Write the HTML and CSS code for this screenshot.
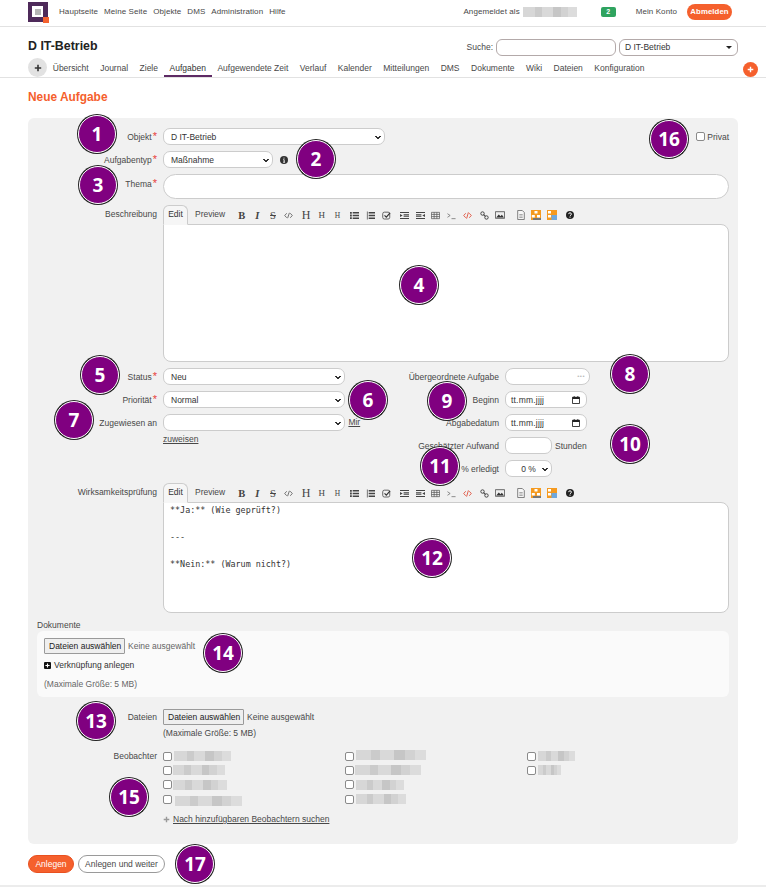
FILE: index.html
```html
<!DOCTYPE html>
<html lang="de">
<head>
<meta charset="utf-8">
<title>Neue Aufgabe</title>
<link rel="stylesheet" href="styles.css">
</head>
<body>
<div class="page">
  <header class="top">
    <svg class="logo" viewBox="0 0 21 21" width="21" height="21"><path fill="#4e2a5a" d="M0 0h20v20H0z"/><path fill="#fff" d="M4 4h11v11H4z"/><path fill="#b5b5b5" d="M7 7h6v6H7z"/><path fill="#f4622f" d="M15 15h6v6h-6z"/></svg>
    <nav class="topnav"><a>Hauptseite</a><a>Meine Seite</a><a>Objekte</a><a>DMS</a><a>Administration</a><a>Hilfe</a></nav>
    <div class="account">
      <span>Angemeldet als</span>
      <span class="blur blur-user"></span>
      <span class="count">2</span>
      <a class="konto">Mein Konto</a>
      <a class="logout">Abmelden</a>
    </div>
  </header>

  <div class="project">
    <h1>D IT-Betrieb</h1>
    <div class="search">
      <span>Suche:</span>
      <input class="search-input" type="text">
      <div class="jump">D IT-Betrieb<i class="caret"></i></div>
    </div>
  </div>

  <div class="tabs">
    <span class="tab-add"><svg viewBox="0 0 10 10" width="8" height="8"><path d="M5 1v8M1 5h8" stroke="#333" stroke-width="2"/></svg></span>
    <a>Übersicht</a><a>Journal</a><a>Ziele</a><a class="on">Aufgaben</a><a>Aufgewendete Zeit</a><a>Verlauf</a><a>Kalender</a><a>Mitteilungen</a><a>DMS</a><a>Dokumente</a><a>Wiki</a><a>Dateien</a><a>Konfiguration</a>
    <span class="tab-plus"><svg viewBox="0 0 10 10" width="7" height="7"><path d="M5 1v8M1 5h8" stroke="#fff" stroke-width="2"/></svg></span>
  </div>

  <h2>Neue Aufgabe</h2>

  <form class="box">
    <div class="row privat-row">
      <label class="lbl">Objekt<em>*</em></label>
      <select class="sel sel-obj"><option>D IT-Betrieb</option></select>
      <label class="privat"><input class="chk" type="checkbox">Privat</label>
    </div>
    <div class="row">
      <label class="lbl">Aufgabentyp<em>*</em></label>
      <select class="sel sel-typ"><option>Maßnahme</option></select>
      <svg class="info" viewBox="0 0 10 10" width="8" height="8"><circle cx="5" cy="5" r="5" fill="#333"/><path d="M5 2v1.3M4 4.6h1.2v3M3.9 7.8h2.4" stroke="#fff" stroke-width="1.1" fill="none"/></svg>
    </div>
    <div class="row">
      <label class="lbl lbl-thema">Thema<em>*</em></label>
      <input class="thema" type="text">
    </div>

    <div class="row row-editor">
      <label class="lbl lbl-ed">Beschreibung</label>
      <div class="editor">
        <div class="edbar">
          <span class="edtab">Edit</span><span class="edprev">Preview</span>
          <div class="tools">
            <b class="t serif">B</b><i class="t serif ital">I</i><s class="t serif">S</s>
            <span class="t"><svg viewBox="0 0 10 10" width="9" height="9"><path d="M3 2.5L.8 5 3 7.5M7 2.5L9.2 5 7 7.5M6 2L4 8" stroke="#555" fill="none" stroke-width=".9"/></svg></span>
            <b class="t serif h1 sp">H</b><span class="t serif h2x">H</span><span class="t serif h3x">H</span>
            <span class="t sp"><svg viewBox="0 0 10 10" width="9" height="9"><path d="M0 1h2v2H0zM0 4h2v2H0zM0 7h2v2H0zM3 1.2h7v1.6H3zM3 4.2h7v1.6H3zM3 7.2h7v1.6H3z" fill="#444"/></svg></span>
            <span class="t"><svg viewBox="0 0 10 10" width="9" height="9"><path d="M1 .5v9h.8v-9zM3 1.2h7v1.6H3zM3 4.2h7v1.6H3zM3 7.2h7v1.6H3z" fill="#444"/></svg></span>
            <span class="t"><svg viewBox="0 0 10 10" width="9" height="9"><rect x=".8" y="1.3" width="7.8" height="7.6" rx="1.8" fill="none" stroke="#555"/><path d="M2.8 4.8l2 2L9 2" stroke="#333" stroke-width="1.3" fill="none"/></svg></span>
            <span class="t sp2"><svg viewBox="0 0 10 10" width="9" height="9"><path d="M0 1h10v1.2H0zM0 7.8h10V9H0zM4 3.7h6v1H4zM4 5.3h6v1H4zM0 3.2L3 5 0 6.8z" fill="#444"/></svg></span>
            <span class="t"><svg viewBox="0 0 10 10" width="9" height="9"><path d="M0 1h10v1.2H0zM0 7.8h10V9H0zM0 3.7h6v1H0zM0 5.3h6v1H0zM10 3.2L7 5l3 1.8z" fill="#444"/></svg></span>
            <span class="t"><svg viewBox="0 0 10 10" width="9" height="9"><path d="M.5 1.5h9v7h-9zM.5 3.8h9M.5 6.2h9M3.5 1.5v7M6.5 1.5v7" stroke="#555" stroke-width=".8" fill="none"/></svg></span>
            <span class="t"><svg viewBox="0 0 10 10" width="9" height="9"><path d="M.5 3l3 2-3 2M5 8.5h4.5" stroke="#666" stroke-width=".8" fill="none"/></svg></span>
            <span class="t"><svg viewBox="0 0 10 10" width="9" height="9"><path d="M3 2.5L.8 5 3 7.5M7 2.5L9.2 5 7 7.5M6 1.5L4 8.5" stroke="#e0503c" fill="none" stroke-width="1"/></svg></span>
            <span class="t sp"><svg viewBox="0 0 10 10" width="9" height="9"><circle cx="2.8" cy="2.8" r="1.9" fill="none" stroke="#444" stroke-width="1.1"/><circle cx="7.2" cy="7.2" r="1.9" fill="none" stroke="#444" stroke-width="1.1"/><path d="M4 4l2 2" stroke="#444" stroke-width="1.2"/></svg></span>
            <span class="t"><svg viewBox="0 0 10 10" width="10" height="10"><path d="M.4 1.7h9.2v6.6H.4z" fill="#eee" stroke="#444" stroke-width=".8"/><path d="M1.2 7.6l2.6-3 1.6 1.6 1.5-1.4 2 2.8z" fill="#333"/></svg></span>
            <span class="t sp3"><svg viewBox="0 0 10 10" width="10" height="10"><path d="M1.7.5h4.6l2 2v7H1.7z" fill="#f6f6f6" stroke="#666" stroke-width=".8"/><path d="M3.3 4.5h3.4M3.3 6h3.4M3.3 7.5h3.4" stroke="#777" stroke-width=".6"/></svg></span>
            <span class="t"><svg viewBox="0 0 10 10" width="10" height="10"><path d="M0 0h10v10H0z" fill="#f59a1f"/><path d="M3.5 1h3v2.5h-3zM.8 5h3v2.5h-3zM6 5h3v2.5H6z" fill="#fff"/><path d="M2 8h8v2H2z" fill="#777"/></svg></span>
            <span class="t"><svg viewBox="0 0 10 10" width="10" height="10"><path d="M0 0h10v10H0z" fill="#f59a1f"/><path d="M1 1h3v2.5H1zM1 5h3v2.5H1z" fill="#fff"/><path d="M4.5 5H10v5H4.5z" fill="#6fa8dc"/></svg></span>
            <span class="t sp"><svg viewBox="0 0 10 10" width="8" height="8"><circle cx="5" cy="5" r="5" fill="#222"/><path d="M3.2 3.9c0-2.2 3.6-2.2 3.6 0 0 1.4-1.8 1.2-1.8 2.6M5 7.2v1.2" stroke="#fff" stroke-width="1.2" fill="none"/></svg></span>
          </div>
        </div>
        <textarea class="ta ta-desc"></textarea>
      </div>
    </div>

    <div class="cols">
      <div class="col col-l">
        <div class="row">
          <label class="lbl">Status<em>*</em></label>
          <select class="sel sel-mid"><option>Neu</option></select>
        </div>
        <div class="row">
          <label class="lbl">Priorität<em>*</em></label>
          <select class="sel sel-mid"><option>Normal</option></select>
        </div>
        <div class="row row-assign">
          <label class="lbl">Zugewiesen an</label>
          <div class="assign"><select class="sel sel-mid"><option></option></select> <a class="ul">Mir zuweisen</a></div>
        </div>
      </div>
      <div class="col col-r">
        <div class="row">
          <label class="lbl lbl-r">Übergeordnete Aufgabe</label>
          <div class="parent">•••</div>
        </div>
        <div class="row">
          <label class="lbl lbl-r">Beginn</label>
          <div class="date">tt.mm.jjjj<svg viewBox="0 0 10 10" width="8" height="8"><path d="M.6 1.6h8.8v7.8H.6z" fill="none" stroke="#222" stroke-width="1.1"/><path d="M.6 1.2h8.8v2.4H.6zM2.2 0h1v2h-1zM6.8 0h1v2h-1z" fill="#222"/></svg></div>
        </div>
        <div class="row">
          <label class="lbl lbl-r">Abgabedatum</label>
          <div class="date">tt.mm.jjjj<svg viewBox="0 0 10 10" width="8" height="8"><path d="M.6 1.6h8.8v7.8H.6z" fill="none" stroke="#222" stroke-width="1.1"/><path d="M.6 1.2h8.8v2.4H.6zM2.2 0h1v2h-1zM6.8 0h1v2h-1z" fill="#222"/></svg></div>
        </div>
        <div class="row">
          <label class="lbl lbl-r">Geschätzter Aufwand</label>
          <input class="hours" type="text"><span class="unit">Stunden</span>
        </div>
        <div class="row">
          <label class="lbl lbl-r">% erledigt</label>
          <select class="sel sel-pct"><option>0 %</option></select>
        </div>
      </div>
    </div>

    <div class="row row-editor">
      <label class="lbl lbl-ed">Wirksamkeitsprüfung</label>
      <div class="editor">
        <div class="edbar">
          <span class="edtab">Edit</span><span class="edprev">Preview</span>
          <div class="tools">
            <b class="t serif">B</b><i class="t serif ital">I</i><s class="t serif">S</s>
            <span class="t"><svg viewBox="0 0 10 10" width="9" height="9"><path d="M3 2.5L.8 5 3 7.5M7 2.5L9.2 5 7 7.5M6 2L4 8" stroke="#555" fill="none" stroke-width=".9"/></svg></span>
            <b class="t serif h1 sp">H</b><span class="t serif h2x">H</span><span class="t serif h3x">H</span>
            <span class="t sp"><svg viewBox="0 0 10 10" width="9" height="9"><path d="M0 1h2v2H0zM0 4h2v2H0zM0 7h2v2H0zM3 1.2h7v1.6H3zM3 4.2h7v1.6H3zM3 7.2h7v1.6H3z" fill="#444"/></svg></span>
            <span class="t"><svg viewBox="0 0 10 10" width="9" height="9"><path d="M1 .5v9h.8v-9zM3 1.2h7v1.6H3zM3 4.2h7v1.6H3zM3 7.2h7v1.6H3z" fill="#444"/></svg></span>
            <span class="t"><svg viewBox="0 0 10 10" width="9" height="9"><rect x=".8" y="1.3" width="7.8" height="7.6" rx="1.8" fill="none" stroke="#555"/><path d="M2.8 4.8l2 2L9 2" stroke="#333" stroke-width="1.3" fill="none"/></svg></span>
            <span class="t sp2"><svg viewBox="0 0 10 10" width="9" height="9"><path d="M0 1h10v1.2H0zM0 7.8h10V9H0zM4 3.7h6v1H4zM4 5.3h6v1H4zM0 3.2L3 5 0 6.8z" fill="#444"/></svg></span>
            <span class="t"><svg viewBox="0 0 10 10" width="9" height="9"><path d="M0 1h10v1.2H0zM0 7.8h10V9H0zM0 3.7h6v1H0zM0 5.3h6v1H0zM10 3.2L7 5l3 1.8z" fill="#444"/></svg></span>
            <span class="t"><svg viewBox="0 0 10 10" width="9" height="9"><path d="M.5 1.5h9v7h-9zM.5 3.8h9M.5 6.2h9M3.5 1.5v7M6.5 1.5v7" stroke="#555" stroke-width=".8" fill="none"/></svg></span>
            <span class="t"><svg viewBox="0 0 10 10" width="9" height="9"><path d="M.5 3l3 2-3 2M5 8.5h4.5" stroke="#666" stroke-width=".8" fill="none"/></svg></span>
            <span class="t"><svg viewBox="0 0 10 10" width="9" height="9"><path d="M3 2.5L.8 5 3 7.5M7 2.5L9.2 5 7 7.5M6 1.5L4 8.5" stroke="#e0503c" fill="none" stroke-width="1"/></svg></span>
            <span class="t sp"><svg viewBox="0 0 10 10" width="9" height="9"><circle cx="2.8" cy="2.8" r="1.9" fill="none" stroke="#444" stroke-width="1.1"/><circle cx="7.2" cy="7.2" r="1.9" fill="none" stroke="#444" stroke-width="1.1"/><path d="M4 4l2 2" stroke="#444" stroke-width="1.2"/></svg></span>
            <span class="t"><svg viewBox="0 0 10 10" width="10" height="10"><path d="M.4 1.7h9.2v6.6H.4z" fill="#eee" stroke="#444" stroke-width=".8"/><path d="M1.2 7.6l2.6-3 1.6 1.6 1.5-1.4 2 2.8z" fill="#333"/></svg></span>
            <span class="t sp3"><svg viewBox="0 0 10 10" width="10" height="10"><path d="M1.7.5h4.6l2 2v7H1.7z" fill="#f6f6f6" stroke="#666" stroke-width=".8"/><path d="M3.3 4.5h3.4M3.3 6h3.4M3.3 7.5h3.4" stroke="#777" stroke-width=".6"/></svg></span>
            <span class="t"><svg viewBox="0 0 10 10" width="10" height="10"><path d="M0 0h10v10H0z" fill="#f59a1f"/><path d="M3.5 1h3v2.5h-3zM.8 5h3v2.5h-3zM6 5h3v2.5H6z" fill="#fff"/><path d="M2 8h8v2H2z" fill="#777"/></svg></span>
            <span class="t"><svg viewBox="0 0 10 10" width="10" height="10"><path d="M0 0h10v10H0z" fill="#f59a1f"/><path d="M1 1h3v2.5H1zM1 5h3v2.5H1z" fill="#fff"/><path d="M4.5 5H10v5H4.5z" fill="#6fa8dc"/></svg></span>
            <span class="t sp"><svg viewBox="0 0 10 10" width="8" height="8"><circle cx="5" cy="5" r="5" fill="#222"/><path d="M3.2 3.9c0-2.2 3.6-2.2 3.6 0 0 1.4-1.8 1.2-1.8 2.6M5 7.2v1.2" stroke="#fff" stroke-width="1.2" fill="none"/></svg></span>
          </div>
        </div>
        <textarea class="ta ta-check">**Ja:** (Wie geprüft?)

---

**Nein:** (Warum nicht?)</textarea>
      </div>
    </div>

    <div class="doc-label">Dokumente</div>
    <div class="docs">
      <div class="file"><span class="filebtn">Dateien auswählen</span><span class="nofile">Keine ausgewählt</span></div>
      <div class="addlink"><svg viewBox="0 0 10 10" width="7" height="7"><rect width="10" height="10" rx="1.5" fill="#111"/><path d="M5 2v6M2 5h6" stroke="#fff" stroke-width="1.6"/></svg>Verknüpfung anlegen</div>
      <div class="hint">(Maximale Größe: 5 MB)</div>
    </div>

    <div class="row row-files">
      <label class="lbl lbl-plain">Dateien</label>
      <div>
        <div class="file"><span class="filebtn">Dateien auswählen</span><span class="nofile dark">Keine ausgewählt</span></div>
        <div class="hint hint-files">(Maximale Größe: 5 MB)</div>
      </div>
    </div>

    <div class="row row-watch">
      <label class="lbl lbl-plain">Beobachter</label>
      <div class="watch-area">
        <div class="watchers">
          <div class="w"><input class="chk" type="checkbox"><span class="blur w57"></span></div>
          <div class="w"><input class="chk" type="checkbox"><span class="blur w52 tight"></span></div>
          <div class="w"><input class="chk" type="checkbox"><span class="blur w54 tight"></span></div>
          <div class="w"><input class="chk" type="checkbox"><span class="blur w67 low"></span></div>
          <div class="w"><input class="chk" type="checkbox"><span class="blur w70 high"></span></div>
          <div class="w"><input class="chk" type="checkbox"><span class="blur w66 tight"></span></div>
          <div class="w"><input class="chk" type="checkbox"><span class="blur w48"></span></div>
          <div class="w"><input class="chk" type="checkbox"><span class="blur w50"></span></div>
          <div class="w"><input class="chk" type="checkbox"><span class="blur w37"></span></div>
          <div class="w"><input class="chk" type="checkbox"><span class="blur w23"></span></div>
        </div>
        <div class="watch-search"><svg viewBox="0 0 10 10" width="7" height="7"><path d="M5 1v8M1 5h8" stroke="#999" stroke-width="2"/></svg><a class="ul">Nach hinzufügbaren Beobachtern suchen</a></div>
      </div>
    </div>
  </form>

  <div class="actions">
    <button class="btn primary" type="button">Anlegen</button>
    <button class="btn" type="button">Anlegen und weiter</button>
  </div>
  <div class="foot"></div>

  <span class="badge b1">1</span><span class="badge b2">2</span><span class="badge b3">3</span><span class="badge b4">4</span><span class="badge b5">5</span><span class="badge b6">6</span><span class="badge b7">7</span><span class="badge b8">8</span><span class="badge b9">9</span><span class="badge b10">10</span><span class="badge b11">11</span><span class="badge b12">12</span><span class="badge b13">13</span><span class="badge b14">14</span><span class="badge b15">15</span><span class="badge b16">16</span><span class="badge b17">17</span>
</div>
</body>
</html>
```

FILE: styles.css
```css
* { box-sizing: border-box; }
html, body { margin: 0; padding: 0; background: #fff; }
body { font-family: "Liberation Sans", Arial, sans-serif; font-size: 8.5px; color: #484848; }
.page { position: relative; width: 766px; height: 887px; overflow: hidden; }

/* header */
.top { height: 27px; border-bottom: 1px solid #e2e2e2; display: flex; align-items: center; padding: 0 34px 3px 28px; font-size: 8px; letter-spacing: .08px; }
.logo { flex: none; margin-top: 1px; }
.topnav { display: flex; gap: 6px; margin-left: 10px; }
.account { margin-left: auto; display: flex; align-items: center; }
.blur-user { width: 54px; height: 10px; margin-left: 3px; }
.count { width: 15px; height: 10px; margin-left: 24px; border-radius: 2px; background: #2fa35f; color: #fff; font-size: 7px; line-height: 9px; text-align: center; font-weight: bold; }
.konto { margin-left: 20px; }
.logout { margin-left: 10px; width: 45px; height: 16px; border-radius: 8px; background: #f5602d; color: #fff; font-weight: bold; line-height: 16px; text-align: center; font-size: 7.8px; margin-top: 1px; }

/* project header */
.project { height: 29px; padding: 10px 28px 0; display: flex; justify-content: space-between; }
h1 { margin: 2px 0 0; font-size: 12.4px; line-height: 15px; font-weight: bold; color: #222; }
.search { display: flex; align-items: flex-start; gap: 3px; height: 17px; margin-top: 1.5px; }
.search > span { line-height: 17px; }
.search-input { width: 120px; height: 17px; border: 1px solid #b3a9a9; border-radius: 6px; background: #fff; padding: 0; }
.jump { position: relative; width: 119px; height: 17px; border: 1px solid #b3a9a9; border-radius: 6px; background: #fff; line-height: 15px; padding-left: 5px; color: #333; }
.caret { position: absolute; right: 5px; top: 6px; border: 3px solid transparent; border-top: 3px solid #222; border-bottom: 0; }

/* tabs */
.tabs { position: relative; height: 21px; margin-top: 1px; border-bottom: 1px solid #e2e2e2; display: flex; align-items: center; padding: 0 0 0 47px; font-size: 8.5px; }
.tabs a { padding: 0 5.76px; height: 20px; line-height: 22px; }
.tab-add { position: absolute; left: 28px; top: 1px; width: 19px; height: 19px; border-radius: 50%; background: #e2e2e2; display: flex; align-items: center; justify-content: center; }
.tabs a.on { border-bottom: 2px solid #5d2a64; color: #333; }
.tab-plus { position: absolute; left: 743px; top: 5px; width: 15px; height: 15px; border-radius: 50%; background: #f5602d; display: flex; align-items: center; justify-content: center; }

h2 { margin: 12px 0 0 28px; font-size: 11.9px; line-height: 14px; color: #f5602d; font-weight: bold; }

/* form box */
.box { margin: 14px 28px 0; height: 726px; padding: 10px 9px 0; background: #f1f1f1; border-radius: 6px; display: flex; flex-direction: column; }
.row { display: flex; align-items: center; margin-bottom: 6px; }
.lbl { flex: none; width: 120px; margin-right: 6px; text-align: right; white-space: nowrap; }
.lbl em { color: #e8423a; font-style: normal; font-size: 11px; line-height: 8px; margin-left: 1px; }
.lbl-ed { align-self: flex-start; padding-top: 3.5px; }
.lbl-thema { margin-top: -5px; }
.sel { appearance: none; -webkit-appearance: none; height: 17px; border: 1px solid #ccc; border-radius: 7px; font: 8.5px "Liberation Sans", Arial, sans-serif; color: #333; padding: 0 12px 0 7px; background-color: #fff; background-image: linear-gradient(45deg, transparent 40%, #333 40% 70%, transparent 70%), linear-gradient(135deg, transparent 30%, #333 30% 60%, transparent 60%); background-size: 3px 3px, 3px 3px; background-position: right 6px top 7px, right 3.4px top 7px; background-repeat: no-repeat; }
.sel-obj { width: 222px; }
.sel-typ { width: 110px; }
.sel-mid { width: 182px; }
.sel-pct { width: 47px; padding: 0; text-align: center; }
.info { margin-left: 7px; }
.privat { margin-left: auto; display: flex; align-items: center; gap: 2px; }
.chk { appearance: none; -webkit-appearance: none; width: 9px; height: 9px; margin: 0; flex: none; background: #fff; border: 1px solid #8a8a8a; border-radius: 2px; }
.thema { flex: 1; height: 25px; border: 1px solid #ccc; border-radius: 13px; background: #fff; padding: 0; }

/* wiki editor */
.editor { flex: 1; min-width: 0; }
.edbar { height: 20px; display: flex; align-items: flex-start; position: relative; z-index: 1; margin-bottom: -1px; }
.edtab { width: 25px; height: 20px; background: #f6f6f6; border: 1px solid #ccc; border-bottom: 1px solid #f6f6f6; border-radius: 6px 6px 0 0; text-align: center; line-height: 17px; color: #333; }
.edprev { width: 45px; padding-left: 7px; height: 18px; line-height: 19px; }
.tools { display: flex; align-items: center; height: 18px; margin-top: 1px; margin-left: 1px; }
.t { width: 15.6px; flex: none; display: flex; align-items: center; justify-content: center; text-decoration: none; color: #444; }
.serif { font-family: "Liberation Serif", serif; font-size: 10.5px; }
.ital { font-weight: bold; }
s.t { text-decoration: line-through; }
.h1 { font-size: 12px; font-weight: normal; }
.h2x { font-size: 9px; }
.h3x { font-size: 7.5px; }
.sp { margin-left: 2px; }
.sp2 { margin-left: 3px; }
.sp3 { margin-left: 5px; }
.ta { display: block; width: 100%; border: 1px solid #ccc; border-radius: 0 8px 8px 8px; background: #fff; resize: none; padding: 1px 6px; margin: 0; font: 8.4px/13.4px "DejaVu Sans Mono", monospace; color: #333; outline: 0; }
.ta-desc { height: 138px; }
.ta-check { height: 111px; }
.row-editor { align-items: flex-start; margin-bottom: 6px; }

/* two columns */
.cols { display: flex; height: 109px; margin-bottom: 6px; }
.col-l { width: 336px; }
.col-r { flex: 1; }
.col-r .row .lbl { width: 126px; }
.row-assign { align-items: flex-start; }
.row-assign .lbl { line-height: 18px; }
.assign { width: 205px; line-height: 17px; }
.assign .sel { vertical-align: top; }
.assign .ul { margin-left: 1px; }
.ul { text-decoration: underline; color: #484848; }
.parent { width: 85px; height: 17px; border: 1px solid #ccc; border-radius: 8px; background: #fff; text-align: right; padding-right: 4px; line-height: 15px; color: #bbb; font-size: 6px; letter-spacing: .5px; }
.date { width: 82px; height: 17px; border: 1px solid #ccc; border-radius: 7px; background: #fff; display: flex; align-items: center; justify-content: space-between; padding: 0 6px 0 5px; color: #333; letter-spacing: .2px; }
.hours { width: 47px; height: 17px; border: 1px solid #ccc; border-radius: 7px; background: #fff; padding: 0; }
.unit { margin-left: 3px; }

/* files */
.doc-label { height: 18px; line-height: 12px; padding-top: 6px; margin-top: -6px; }
.docs { height: 66px; background: #fafafa; border-radius: 6px; padding: 7px 7px 0; }
.file { display: flex; align-items: center; height: 16px; }
.filebtn { height: 16px; padding: 0 4px; border: 1px solid #9a9a9a; background: #efefef; line-height: 14px; color: #222; border-radius: 1px; width: 81px; text-align: center; white-space: nowrap; }
.nofile { margin-left: 3px; color: #666; }
.nofile.dark { color: #484848; }
.addlink { margin-top: 6px; display: flex; align-items: center; gap: 3px; height: 10px; line-height: 10px; color: #333; }
.hint { margin-top: 9px; height: 10px; line-height: 10px; color: #666; }
.hint-files { margin-top: 3px; color: #484848; }
.row-files { margin-top: 12px; align-items: flex-start; margin-bottom: 0; }
.lbl-plain { line-height: 16px; }
.row-watch { margin-top: 11px; align-items: flex-start; }
.row-watch .lbl { line-height: 14px; }
.watch-area { flex: 1; }
.watchers { display: grid; grid-template-rows: repeat(4, 14.3px); grid-auto-flow: column; grid-template-columns: 182px 182px 1fr; }
.w { display: flex; align-items: center; gap: 2px; }
.watch-search { margin-top: 6px; display: flex; align-items: center; gap: 3px; height: 14px; }

/* redacted names */
.blur { display: inline-block; height: 10px; background: linear-gradient(90deg, #d7d7d7 0 22%, #cbcbcb 22% 35%, #d9d9d9 35% 55%, #c6c6c6 55% 70%, #d2d2d2 70% 84%, #dcdcdc 84%); }
.tight { margin-left: -1px; }
.low { margin-top: 4px; margin-left: 1px; }
.high { margin-top: -3px; }
.w57 { width: 57px; } .w52 { width: 52px; } .w54 { width: 54px; } .w67 { width: 67px; }
.w70 { width: 70px; } .w66 { width: 66px; } .w48 { width: 48px; } .w50 { width: 50px; }
.w37 { width: 37px; } .w23 { width: 23px; }

/* bottom */
.actions { display: flex; gap: 4px; margin: 11px 0 0 28px; }
.btn { height: 18px; padding: 0; border: 1px solid #9a9a9a; border-radius: 9px; background: #fff; font: 8.5px "Liberation Sans", Arial, sans-serif; color: #484848; width: 87px; }
.btn.primary { width: 46px; background: #f5602d; border-color: #e9501f; color: #fff; }
.foot { position: absolute; left: 0; right: 0; top: 885px; height: 2px; background: #ececec; }

/* callouts */
.badge { position: absolute; width: 38px; height: 38px; margin: -19px 0 0 -19px; border-radius: 50%; background: #800080; border: 1px solid #fff; box-shadow: 0 0 0 1px #222; color: #fff; font: 700 19px/36px "Open Sans", sans-serif; text-align: center; }
.b1 { left: 97px; top: 134px; } .b2 { left: 316px; top: 159px; } .b3 { left: 98px; top: 185px; }
.b4 { left: 419px; top: 285px; } .b5 { left: 100px; top: 375px; } .b6 { left: 368px; top: 400px; }
.b7 { left: 74px; top: 420px; } .b8 { left: 630px; top: 374px; } .b9 { left: 447px; top: 401px; }
.b10 { left: 630px; top: 444px; } .b11 { left: 440px; top: 466px; } .b12 { left: 432px; top: 558px; }
.b13 { left: 96px; top: 721px; } .b14 { left: 223px; top: 653px; } .b15 { left: 129px; top: 797px; }
.b16 { left: 669px; top: 139px; } .b17 { left: 195px; top: 864px; }
```
